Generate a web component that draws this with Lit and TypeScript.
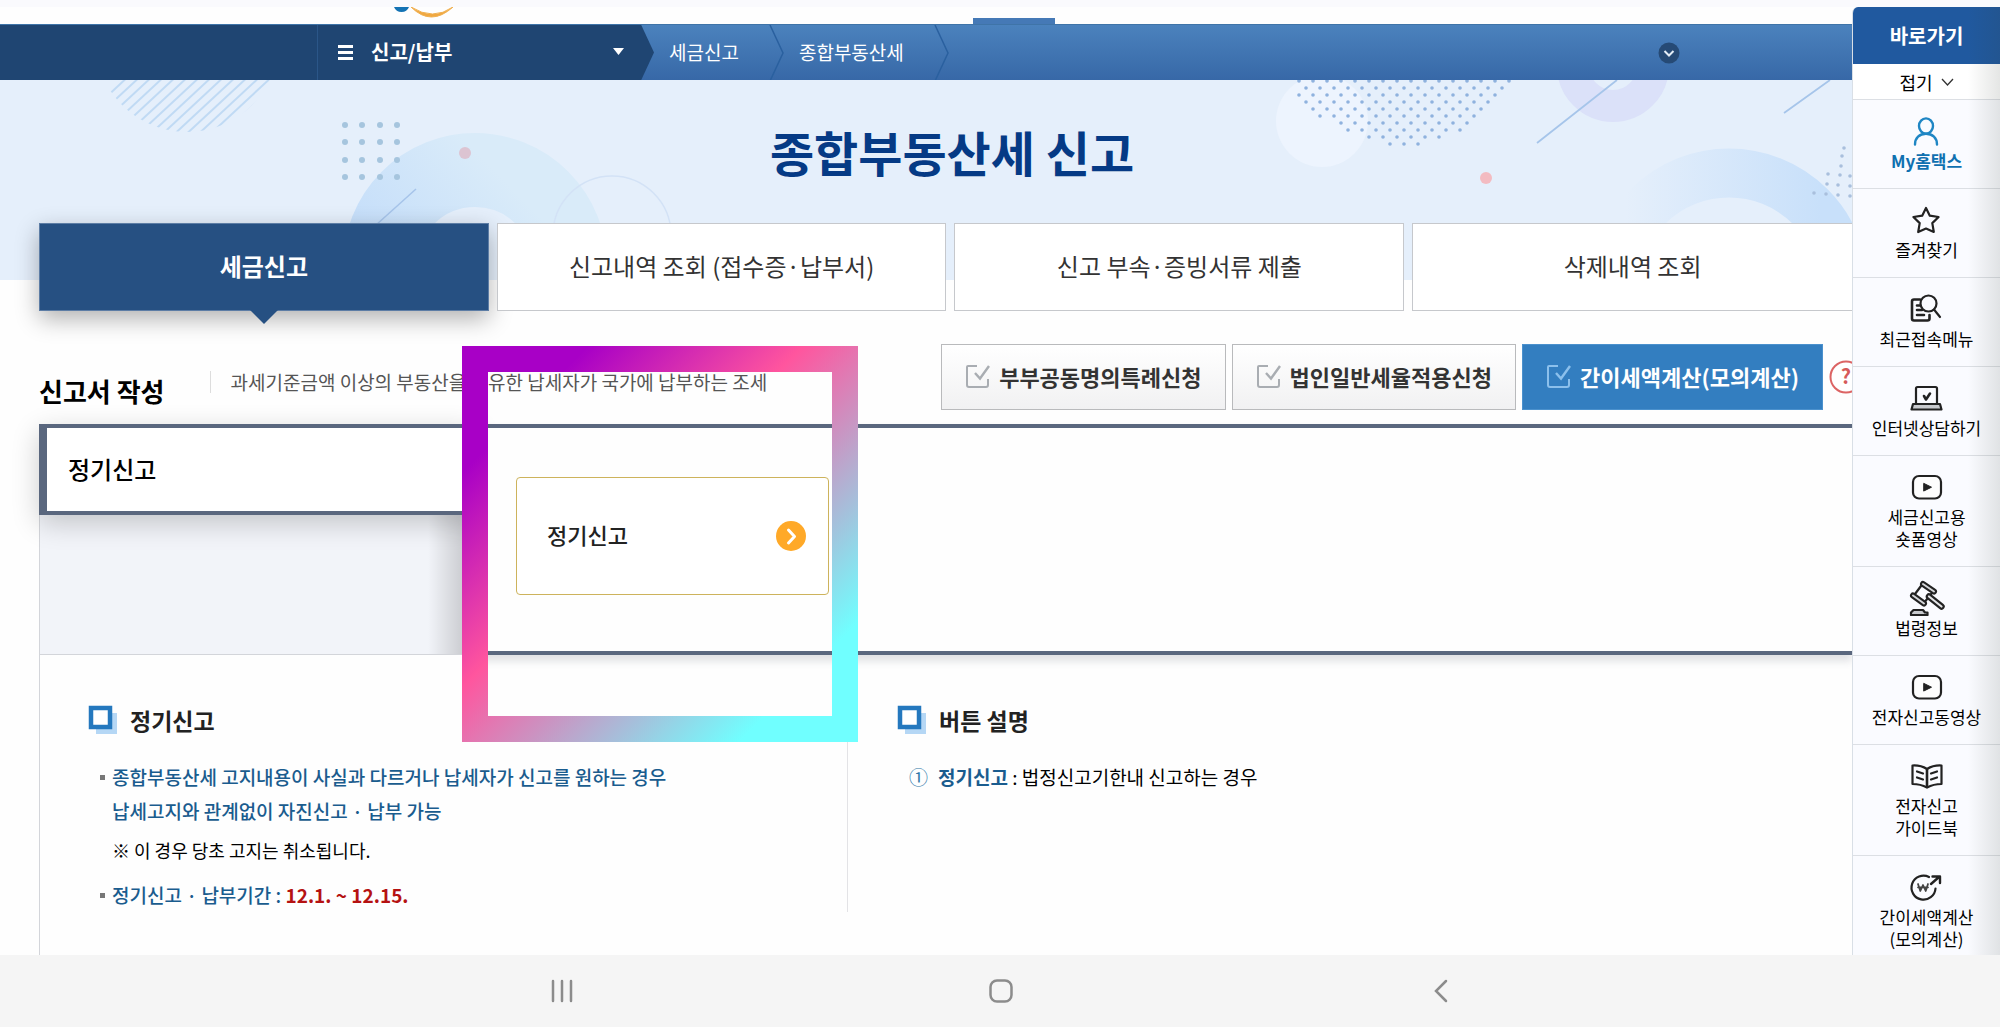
import { LitElement, html, svg, css } from "lit";
import { customElement } from "lit/decorators.js";

interface QuickLink {
  icon: string;
  lines: string[];
  accent?: boolean;
}

const TABS = ["세금신고", "신고내역 조회 (접수증·납부서)", "신고 부속·증빙서류 제출", "삭제내역 조회"];

const QUICK_LINKS: QuickLink[] = [
  { icon: "user", lines: ["My홈택스"], accent: true },
  { icon: "star", lines: ["즐겨찾기"] },
  { icon: "recent", lines: ["최근접속메뉴"] },
  { icon: "laptop", lines: ["인터넷상담하기"] },
  { icon: "play", lines: ["세금신고용", "숏폼영상"] },
  { icon: "gavel", lines: ["법령정보"] },
  { icon: "play", lines: ["전자신고동영상"] },
  { icon: "book", lines: ["전자신고", "가이드북"] },
  { icon: "won", lines: ["간이세액계산", "(모의계산)"] },
];

const GLYPHS: Record<string, unknown> = {
  user: svg`<g stroke="#1f86c4" stroke-width="2.4"><ellipse cx="17" cy="13" rx="7" ry="7.600"/><path d="M6 31.500c0-6.600 4.500-10.800 11-10.800S28 24.900 28 31.500"/></g>`,
  star: svg`<path d="M17 6l3.800 7.700 8.800 1.300-6.300 6.100 1.500 8.900L17 26.500 9.200 30l1.500-8.900L4.400 15l8.800-1.300z"/>`,
  recent: svg`<path d="M11 8.500H5Q3 8.500 3 10.500v17q0 2 2 2h13.500q2 0 2-2V24" stroke-width="2.600"/><path d="M8 14.500h3M8 19h5M8 24h7" stroke-width="2.600"/><circle cx="19.500" cy="12.500" r="8" fill="#fafbff"/><path d="M25 18.500l6 7.500"/>`,
  laptop: svg`<path d="M7 24V8.500q0-1.500 1.500-1.500h18q1.500 0 1.500 1.500V24"/><path d="M4 24h27l1.500 5.500h-30z" fill="#c8cace"/><path d="M15 16l2 3.500 4-6" stroke-width="2.600"/>`,
  play: svg`<rect x="4" y="7" width="28" height="22.500" rx="6" fill="#fdfdfd"/><path d="M15 14.500l7.500 3.700-7.500 3.700z" fill="#222" stroke-width="1"/>`,
  gavel: svg`<path d="M12 6L6 14M23 13l-6.500 8"/>
    <path d="M20 16.500L32.500 26.500" stroke-width="6.500"/><path d="M20 16.500L32.500 26.500" stroke="#e4e5e8" stroke-width="2.200"/>
    <path d="M14 4L25 11.500M4 15.500L15 23.500" stroke-width="6"/><path d="M14 4L25 11.500M4 15.500L15 23.500" stroke="#d5d7da" stroke-width="2"/>
    <path d="M2 35v-2.500L4.500 30H14l2 2.500h2.500V35z" fill="#c8cace"/>`,
  book: svg`<path d="M3.500 7.500q8-.5 14.500 3.500 6.500-4 14.500-3.500V26q-8 0-14.500 3.500Q11.500 26 3.500 26z"/><path d="M18 11v18" stroke-width="2.600"/><path d="M8 13.500l6 2M8 19.500l6 2M28 13.500l-6 2M28 19.500l-6 2"/>`,
  won: svg`<path d="M20 8A12 12 0 1 0 26.500 19.500"/><path d="M22 15l8-7M23.500 7.500h7.500V14" stroke-width="2.400"/><path d="M9 15l2.300 7 2.700-6 2.700 6 2.300-7M9 18.300h10" stroke="#444" stroke-width="1.800"/>`,
};

const HALFTONE: [number, number][] = [];
for (let row = 0; row < 10; row++) {
  const y = 1 + row * 7;
  const reach = Math.sqrt(134 * 134 - (y + 69) * (y + 69));
  for (let x = 1285 + (row % 2) * 7; x < 1525; x += 14) {
    if (Math.abs(x - 1403) <= reach) HALFTONE.push([x, y]);
  }
}

const GRID_DOTS: [number, number][] = [];
for (const y of [45, 62, 80, 97]) for (const x of [345, 362, 380, 397]) GRID_DOTS.push([x, y]);

const EDGE_DOTS: [number, number][] = [
  [1844, 68], [1842, 76], [1841, 86], [1828, 94], [1840, 95], [1850, 96], [1827, 104],
  [1838, 105], [1850, 106], [1814, 113], [1826, 114], [1838, 115], [1850, 116],
];

const STRIPES = Array.from({ length: 24 }, (_, i) => 60 + i * 12);

@customElement("app-root")
export class AppRoot extends LitElement {
  static styles = css`
    :host {
      display: flex;
      flex-direction: column;
      min-height: 100vh;
      position: relative;
      overflow: hidden;
      background: #fefefe;
      color: #111;
      font-family: "Noto Sans CJK KR", "Noto Sans", sans-serif;
      font-size: 19px;
      line-height: 22px;
    }
    * { box-sizing: border-box; }
    h1, h2, h3, p, ul, ol { margin: 0; padding: 0; }
    ul, ol { list-style: none; }
    a { color: inherit; text-decoration: none; }
    button { font: inherit; color: inherit; margin: 0; padding: 0; border: 0; background: none; cursor: pointer; }
    svg { display: block; flex: none; }

    .status { height: 7px; background: #fafafd; }
    .body { flex: 1; display: flex; }
    .main { flex: 1; min-width: 0; overflow: hidden; display: flex; flex-direction: column; }

    .masthead { display: flex; height: 17px; padding-left: 394px; }
    .notch { width: 82px; height: 6px; margin-left: 519px; align-self: flex-end; background: #4579b6; }

    .gnb {
      display: flex; align-items: center; height: 56px; color: #fff;
      background: linear-gradient(#4b82bd, #3768a7);
      border-top: 1px solid #3f74a8;
    }
    .gnb-root {
      display: flex; height: 56px; width: 654px; padding-left: 317px; background: #1f4572;
      clip-path: polygon(0 0, calc(100% - 13px) 0, 100% 50%, calc(100% - 13px) 100%, 0 100%);
    }
    .gnb-menu {
      flex: 1; display: flex; align-items: center; gap: 18px; padding: 0 30px 2px 20px;
      border-left: 1px solid #2b5688; font-size: 20px; font-weight: 700;
    }
    .gnb-menu .caret { margin-left: auto; }
    .crumb { display: flex; align-items: center; height: 56px; gap: 30px; padding-left: 15px; }
    .crumb span { padding-bottom: 2px; }
    .gnb-more { margin-left: auto; margin-right: 172px; }

    .banner { position: relative; overflow: hidden; padding: 39px 0 97px 52px; background: #e5effb; }
    .banner-art { position: absolute; inset: 0; width: 100%; height: 100%; }
    .banner h1 {
      position: relative; text-align: center; color: #053a85;
      font-size: 48px; line-height: 64px; font-weight: 700;
    }

    .tabs {
      position: relative; display: grid; grid-template-columns: 450fr 450fr 450fr 440fr; gap: 8px;
      margin-top: -57px; padding-left: 39px;
    }
    .tab {
      position: relative; display: flex; align-items: center; justify-content: center; height: 88px;
      padding-bottom: 3px; border: 1px solid #c6c8cc; background: #fff; color: #333; font-size: 24px;
    }
    .tab:last-child { border-right: 0; }
    .tab.on {
      background: #265082; border-color: #5d7da5; color: #fff; font-weight: 700;
      box-shadow: 0 8px 22px rgba(0, 0, 0, .3);
    }
    .tab.on::after {
      content: ""; position: absolute; top: 100%; left: 50%; margin-left: -14px;
      border: 14px solid transparent; border-top-color: #265082; border-bottom: 0;
    }

    .section-head { display: flex; align-items: flex-start; padding: 33px 0 14px 39px; }
    .section-head h2 { margin-top: 30px; font-size: 26px; line-height: 34px; font-weight: 700; color: #000; white-space: nowrap; }
    .lead { margin: 27px 0 0 45px; padding-left: 20px; border-left: 1px solid #ddd; color: #555; white-space: nowrap; }
    .actions { display: flex; align-items: center; gap: 6px; margin-left: auto; margin-right: -11px; }
    .action {
      display: flex; align-items: center; gap: 9px; height: 66px; padding: 0 23px 3px 24px;
      border: 1px solid #b9babc; background: linear-gradient(#fff, #f1f1f2);
      color: #333; font-size: 22px; font-weight: 700; white-space: nowrap;
    }
    .action.primary { background: #337ec0; border-color: #4b91cd; color: #fff; }

    .panel { display: grid; grid-template-columns: 437px 1fr; margin-left: 39px; }
    .panel-side { display: flex; flex-direction: column; border-bottom: 1px solid #d3d5da; }
    .panel-tab {
      position: relative; z-index: 1; height: 91px; padding: 0 0 2px 21px; text-align: left;
      border: solid #5a677e; border-width: 4px 0 4px 8px; background: #fff;
      color: #000; font-size: 24px; font-weight: 500;
      box-shadow: 0 8px 26px rgba(0, 0, 0, .2);
    }
    .panel-rest {
      flex: 1; border-left: 1px solid #d3d5da;
      background: linear-gradient(to left, rgba(0, 0, 0, .22), rgba(0, 0, 0, 0) 48px), #f2f4f9;
    }
    .panel-main {
      position: relative; z-index: 2; padding: 49px 40px 56px; background: #fefefe;
      border: solid #5a677e; border-width: 4px 0; box-shadow: 0 6px 8px rgba(60, 70, 90, .16);
    }
    .card {
      display: flex; align-items: center; justify-content: space-between;
      width: 313px; height: 118px; padding: 0 22px 0 30px;
      border: 1px solid #cdb35c; border-radius: 4px; background: #fff;
      color: #222; font-size: 22px; font-weight: 500;
    }
    .card span { padding-bottom: 4px; }

    .guide {
      flex: 1; display: grid; grid-template-columns: 808px 1fr; margin-left: 39px;
      padding: 48px 0 43px; border-left: 1px solid #d3d5da;
    }
    .guide-col { padding-left: 48px; font-size: 19px; line-height: 34px; }
    .guide-col:first-child { border-right: 1px solid #e3e3e6; }
    .guide-col + .guide-col { padding-left: 49px; }
    .guide h3 {
      display: flex; align-items: center; gap: 12px; margin-bottom: 23px;
      font-size: 23px; line-height: 34px; font-weight: 700; color: #222;
    }
    .bullets { display: flex; flex-direction: column; gap: 11px; padding-left: 12px; }
    .bullets li { display: grid; grid-template-columns: 12px 1fr; }
    .bullets li::before { content: ""; width: 5px; height: 5px; margin-top: 15px; background: #777; }
    .blue { color: #1a5c8e; font-weight: 500; }
    .red { color: #b51212; font-weight: 700; }
    .strong { font-weight: 700; }
    .note { margin-top: 5px; font-size: 18px; color: #000; }
    .numbered { display: flex; gap: 10px; padding-left: 12px; color: #000; }
    .num { color: #2f78a8; }

    .side {
      position: relative; width: 148px; background: #fafbff; border-left: 1px solid #d9dfe6;
      border-top-left-radius: 6px; overflow: hidden; text-align: center; color: #000;
    }
    .side::after {
      content: ""; position: absolute; inset: 0 0 0 auto; width: 32px; pointer-events: none;
      background: linear-gradient(to right, rgba(50, 60, 50, 0), rgba(50, 60, 50, .13));
    }
    .side-head { height: 57px; line-height: 57px; background: #20599f; color: #fff; font-size: 20px; font-weight: 700; }
    .fold {
      display: flex; align-items: center; justify-content: center; gap: 8px; width: 100%; height: 36px;
      border-bottom: 1px solid #dcdfe4; background: #fff; font-size: 18px;
    }
    .quick {
      display: flex; flex-direction: column; align-items: center; gap: 1px; padding: 13px 0 16px;
      border-bottom: 1px solid #dcdfe4; font-size: 17px;
    }
    .quick span { display: block; }
    .quick.accent { color: #0f70b0; font-weight: 700; }
    li:last-child .quick { border-bottom: 0; padding-bottom: 0; }

    .sysbar {
      display: grid; grid-template-columns: repeat(3, 22%); justify-content: center; align-items: center;
      height: 72px; padding-left: 3px; background: #f5f5f5;
    }
    .sysbar button { justify-self: center; }

    .marker {
      position: absolute; left: 462px; top: 346px; width: 396px; height: 396px; pointer-events: none; z-index: 3;
      border: 26px solid; border-image: linear-gradient(135deg, #a800c6 16%, #ff559e 43%, #70ffff 85%) 26;
    }
  `;

  private glyph(name: string) {
    return html`<svg width="36" height="36" viewBox="0 0 36 36" fill="none" stroke="#222" stroke-width="2.200" stroke-linejoin="round" stroke-linecap="round" aria-hidden="true">${GLYPHS[name]}</svg>`;
  }

  private check(color: string) {
    return html`<svg width="24" height="24" viewBox="0 0 24 24" fill="none" stroke=${color} stroke-width="2" aria-hidden="true">
      <path d="M11 2H2q-1 0-1 1v18q0 2 2 2h17q2 0 2-2v-6" /><path d="M9 9l5 5.500L23 2" stroke-width="2.400" />
    </svg>`;
  }

  private chevron() {
    return html`<svg width="15" height="56" viewBox="0 0 15 56" fill="none" stroke="#2a609f" stroke-width="1.500" aria-hidden="true"><path d="M1 0l13 28L1 56" /></svg>`;
  }

  private square() {
    return html`<svg width="30" height="30" viewBox="0 0 30 30" aria-hidden="true">
      <rect x="8" y="8" width="21" height="21" fill="#b5d7f5" /><rect x="3" y="3" width="19" height="19" fill="#fff" stroke="#2478be" stroke-width="4.500" />
    </svg>`;
  }

  private bannerArt() {
    return html`<svg class="banner-art" viewBox="0 0 1852 200" preserveAspectRatio="xMidYMin slice" fill="none" aria-hidden="true">
      <defs>
        <clipPath id="disc"><circle cx="187" cy="-40" r="92" /></clipPath>
        <linearGradient id="arcA" x1="0" y1="1" x2="1" y2="0"><stop offset=".2" stop-color="#c2dcfa" /><stop offset=".8" stop-color="#d9ebf9" /></linearGradient>
        <linearGradient id="arcB"><stop offset=".05" stop-color="#e5effb" /><stop offset=".9" stop-color="#c8e0fa" /></linearGradient>
      </defs>
      <g clip-path="url(#disc)" stroke="#c0daf4" stroke-width="2">${STRIPES.map((x) => svg`<path d="M${x} 60L${x + 86} -20" />`)}</g>
      <circle cx="475" cy="185" r="95" stroke="url(#arcA)" stroke-width="74" />
      <g fill="#a6c5de">${GRID_DOTS.map(([x, y]) => svg`<circle cx=${x} cy=${y} r="3" />`)}</g>
      <circle cx="465" cy="73" r="6" fill="#dcc4d2" />
      <path d="M376 145L416 109" stroke="#a6c4ea" stroke-width="1.500" />
      <circle cx="612" cy="155" r="59" stroke="#d3e2f6" stroke-width="1.500" />
      <circle cx="1322" cy="41" r="46" fill="#edf4fe" />
      <g fill="#8fb2de">${HALFTONE.map(([x, y]) => svg`<circle cx=${x} cy=${y} r="1.800" />`)}</g>
      <circle cx="1613" cy="-14" r="40" stroke="#dbe1f9" stroke-width="32" />
      <path d="M1537 63L1617 0M1784 33L1830 0" stroke="#a6c5ea" stroke-width="1.800" />
      <circle cx="1486" cy="98" r="6" fill="#f3bbc1" />
      <circle cx="1729" cy="208" r="115" stroke="url(#arcB)" stroke-width="49" />
      <g fill="#a9bfdd">${EDGE_DOTS.map(([x, y]) => svg`<circle cx=${x} cy=${y} r="1.800" />`)}</g>
    </svg>`;
  }

  render() {
    return html`
      <div class="status"></div>
      <div class="body">
        <main class="main">
          <div class="masthead">
            <svg width="60" height="11" viewBox="0 0 60 11" aria-hidden="true">
              <path d="M0 0h15q-2 5-7.500 5T0 0z" fill="#1473b4" /><path d="M17 0q20 20 42 0-20 14-42 0z" fill="#f0a840" stroke="#f0b050" />
            </svg>
            <div class="notch"></div>
          </div>
          <nav class="gnb">
            <div class="gnb-root">
              <button class="gnb-menu">
                <svg width="15" height="16" viewBox="0 0 15 16" fill="#fff" aria-hidden="true"><path d="M0 1h15v3H0zM0 7h15v3H0zM0 13h15v3H0z" /></svg>
                신고/납부
                <svg class="caret" width="11" height="7" viewBox="0 0 11 7" fill="#fff" aria-hidden="true"><path d="M0 0h11L5.500 7z" /></svg>
              </button>
            </div>
            <a class="crumb" href="#"><span>세금신고</span>${this.chevron()}</a>
            <a class="crumb" href="#"><span>종합부동산세</span>${this.chevron()}</a>
            <button class="gnb-more" aria-label="메뉴 펼치기">
              <svg width="22" height="22" viewBox="0 0 22 22" fill="none" aria-hidden="true"><circle cx="11" cy="11" r="10.500" fill="#264a75" /><path d="M6.500 9l4.500 4.500L15.500 9" stroke="#e4edf6" stroke-width="2" /></svg>
            </button>
          </nav>
          <header class="banner">
            ${this.bannerArt()}
            <h1>종합부동산세 신고</h1>
          </header>
          <nav class="tabs">${TABS.map((t, i) => html`<a class="tab ${i === 0 ? "on" : ""}" href="#">${t}</a>`)}</nav>

          <div class="section-head">
            <h2>신고서 작성</h2>
            <p class="lead">과세기준금액 이상의 부동산을 보유한 납세자가 국가에 납부하는 조세</p>
            <div class="actions">
              <button class="action">${this.check("#a9adb2")}부부공동명의특례신청</button>
              <button class="action">${this.check("#a9adb2")}법인일반세율적용신청</button>
              <button class="action primary">${this.check("#8cc0ec")}간이세액계산(모의계산)</button>
              <button aria-label="도움말">
                <svg width="34" height="34" viewBox="0 0 34 34" aria-hidden="true"><circle cx="17" cy="17" r="15.500" fill="#fff" stroke="#dc6464" stroke-width="2" /><text x="17" y="24" text-anchor="middle" font-size="20" font-weight="700" fill="#d65a5a">?</text></svg>
              </button>
            </div>
          </div>

          <section class="panel">
            <div class="panel-side">
              <button class="panel-tab">정기신고</button>
              <div class="panel-rest"></div>
            </div>
            <div class="panel-main">
              <button class="card">
                <span>정기신고</span>
                <svg width="30" height="30" viewBox="0 0 30 30" fill="none" aria-hidden="true"><circle cx="15" cy="15" r="15" fill="#ffa928" /><path d="M12.500 9l6 6.500-6 6.500" stroke="#fff" stroke-width="3" stroke-linecap="round" stroke-linejoin="round" /></svg>
              </button>
            </div>
          </section>

          <section class="guide">
            <div class="guide-col">
              <h3>${this.square()}정기신고</h3>
              <ul class="bullets">
                <li>
                  <div>
                    <p class="blue">종합부동산세 고지내용이 사실과 다르거나 납세자가 신고를 원하는 경우<br />납세고지와 관계없이 자진신고 · 납부 가능</p>
                    <p class="note">※ 이 경우 당초 고지는 취소됩니다.</p>
                  </div>
                </li>
                <li><p class="blue">정기신고 · 납부기간 : <span class="red">12.1. ~ 12.15.</span></p></li>
              </ul>
            </div>
            <div class="guide-col">
              <h3>${this.square()}버튼 설명</h3>
              <ol>
                <li class="numbered"><span class="num">①</span><p><span class="blue strong">정기신고</span> : 법정신고기한내 신고하는 경우</p></li>
              </ol>
            </div>
          </section>
        </main>

        <aside class="side">
          <div class="side-head">바로가기</div>
          <button class="fold">접기<svg width="13" height="8" viewBox="0 0 13 8" fill="none" stroke="#333" stroke-width="1.300" aria-hidden="true"><path d="M1 1l5.500 6L12 1" /></svg></button>
          <ul>
            ${QUICK_LINKS.map((q) => html`<li><a class="quick ${q.accent ? "accent" : ""}" href="#">${this.glyph(q.icon)}<div>${q.lines.map((l) => html`<span>${l}</span>`)}</div></a></li>`)}
          </ul>
        </aside>
      </div>
      <div class="marker"></div>
      <footer class="sysbar">
        <button aria-label="최근 앱"><svg width="22" height="24" viewBox="0 0 22 24" stroke="#8c8c8c" stroke-width="2.500" stroke-linecap="round" aria-hidden="true"><path d="M2 2v20M11 2v20M20 2v20" /></svg></button>
        <button aria-label="홈"><svg width="24" height="24" viewBox="0 0 24 24" fill="none" stroke="#8c8c8c" stroke-width="2.500" aria-hidden="true"><rect x="1.500" y="1.500" width="21" height="21" rx="6.500" /></svg></button>
        <button aria-label="뒤로"><svg width="14" height="24" viewBox="0 0 14 24" fill="none" stroke="#8c8c8c" stroke-width="2.500" stroke-linecap="round" aria-hidden="true"><path d="M12 2L2 12l10 10" /></svg></button>
      </footer>
    `;
  }
}
